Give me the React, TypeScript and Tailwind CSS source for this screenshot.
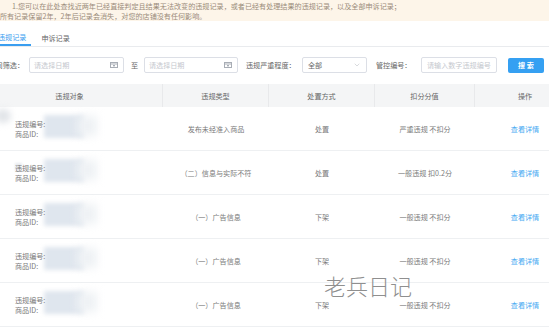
import React from 'react';
import { ChevronDown } from 'lucide-react';

const rows = [
  { type: '发布未经准入商品', action: '处置', score: '严重违规 不扣分', thumb: true },
  { type: '（二）信息与实际不符', action: '处置', score: '一般违规 扣0.2分', hideFirst: true },
  { type: '（一）广告信息', action: '下架', score: '一般违规 不扣分' },
  { type: '（一）广告信息', action: '下架', score: '一般违规 不扣分' },
  { type: '（一）广告信息', action: '下架', score: '一般违规 不扣分' },
];

const CalendarIcon = () => (
  <svg width="8" height="6" viewBox="0 0 8 6" className="shrink-0">
    <rect x="0.5" y="0.5" width="7" height="5" fill="none" stroke="#a8adb5" strokeWidth="1" />
    <line x1="0.5" y1="2" x2="7.5" y2="2" stroke="#a8adb5" strokeWidth="1" />
    <rect x="3" y="3" width="2" height="1.4" fill="#a8adb5" />
  </svg>
);

const DateInput: React.FC<{ w: string }> = ({ w }) => (
  <div className={`${w} h-[16px] border border-[#dcdfe6] rounded-[2px] bg-white flex items-center justify-between pl-[4px] pr-[5px]`}>
    <span className="text-[#c5c8ce]">请选择日期</span>
    <CalendarIcon />
  </div>
);

const App: React.FC = () => {
  return (
    <div className="w-[549px] h-[328px] overflow-hidden relative bg-white font-['Noto_Sans_CJK_SC',sans-serif] text-[7.1px] leading-[10px] text-[#7a7a7a]">
      {/* Notice */}
      <div className="h-[21px] bg-[#fdf5e9] text-[#9a8b7a] pt-[1px]">
        <p className="pl-[12px] whitespace-nowrap">1.您可以在此处查找近两年已经直接判定且结果无法改变的违规记录，或者已经有处理结果的违规记录，以及全部申诉记录；</p>
        <p className="-ml-[6px] whitespace-nowrap">2.所有记录保留2年，2年后记录会消失，对您的店铺没有任何影响。</p>
      </div>

      <div className="-ml-[23px] w-[600px]">
        {/* Tabs */}
        <div className="mt-[8px] flex border-b border-[#e9ebee]">
          <div className="ml-[16px] px-[5px] h-[17px] flex items-center border-b-2 border-[#3a9ef0] text-[#3a9ef0]">违规记录</div>
          <div className="ml-[5px] px-[5px] h-[17px] flex items-center text-[#666]">申诉记录</div>
        </div>

        {/* Filters */}
        <div className="mt-[10px] h-[16px] flex items-center text-[#666]">
          <span className="w-[47px] text-right whitespace-nowrap">时间筛选：</span>
          <div className="ml-[5px]"><DateInput w="w-[95px]" /></div>
          <span className="ml-[7px] w-[7px]">至</span>
          <div className="ml-[6px]"><DateInput w="w-[94px]" /></div>
          <span className="ml-[8px] w-[51px] whitespace-nowrap">违规严重程度：</span>
          <div className="ml-[5px] w-[65px] h-[16px] border border-[#dcdfe6] rounded-[2px] flex items-center justify-between pl-[5px] pr-[5px] text-[#666]">
            <span>全部</span>
            <ChevronDown size={8} strokeWidth={1.5} className="text-[#b3b7bd]" />
          </div>
          <span className="ml-[9px] w-[37px] whitespace-nowrap">管控编号：</span>
          <div className="ml-[8px] w-[76px] h-[16px] border border-[#dcdfe6] rounded-[2px] flex items-center pl-[5px] text-[#c5c8ce] whitespace-nowrap overflow-hidden">请输入数字违规编号</div>
          <button className="ml-[11px] w-[36px] h-[15px] rounded-[2px] bg-[#35a0f2] text-white font-bold flex items-center justify-center">搜 索</button>
        </div>

        {/* Table */}
        <div className="mt-[11px]">
          <div className="h-[23px] bg-[#f4f5f6] flex text-[#666]">
            <div className="w-[186px] flex items-center justify-center border-r border-[#e8e9eb]">违规对象</div>
            <div className="w-[106px] flex items-center justify-center border-r border-[#e8e9eb]">违规类型</div>
            <div className="w-[106px] flex items-center justify-center border-r border-[#e8e9eb]">处置方式</div>
            <div className="w-[100px] flex items-center justify-center border-r border-[#e8e9eb]">扣分分值</div>
            <div className="w-[100px] flex items-center justify-center">操作</div>
          </div>

          {rows.map((r, i) => (
            <div key={i} className="h-[44px] flex border-b border-[#eef0f2]">
              <div className="w-[186px] relative flex flex-col justify-center pl-[38px] pt-[1px]">
                {r.thumb && <div className="absolute left-[18px] top-[2px] w-[16px] h-[14px] rounded-full bg-[#e2e5e9] blur-[3px]" />}
                <div className="absolute left-[67px] top-[8px] w-[40px] h-[23px] bg-[#dfe6ee] blur-[2px]" />
                <div className="absolute left-[100px] top-[9px] w-[20px] h-[20px] bg-[#eff2f5] blur-[4px]" />
                {r.hideFirst && <div className="absolute left-[38px] top-[12px] w-[7px] h-[8px] bg-[#e8ebef] blur-[1px]" />}
                <span className="relative">违规编号:</span>
                <span className="relative">商品ID:</span>
              </div>
              <div className="w-[106px] flex items-center justify-center">{r.type}</div>
              <div className="w-[106px] flex items-center justify-center">{r.action}</div>
              <div className="w-[100px] flex items-center justify-center whitespace-nowrap">{r.score}</div>
              <div className="w-[100px] flex items-center justify-center text-[#45a9f2]">查看详情</div>
            </div>
          ))}
        </div>
      </div>

      {/* Watermark */}
      <div className="absolute left-[324px] top-[272px] text-[22px] leading-[26px] font-light text-[#8f8f8f]">老兵日记</div>
    </div>
  );
};

export default App;
